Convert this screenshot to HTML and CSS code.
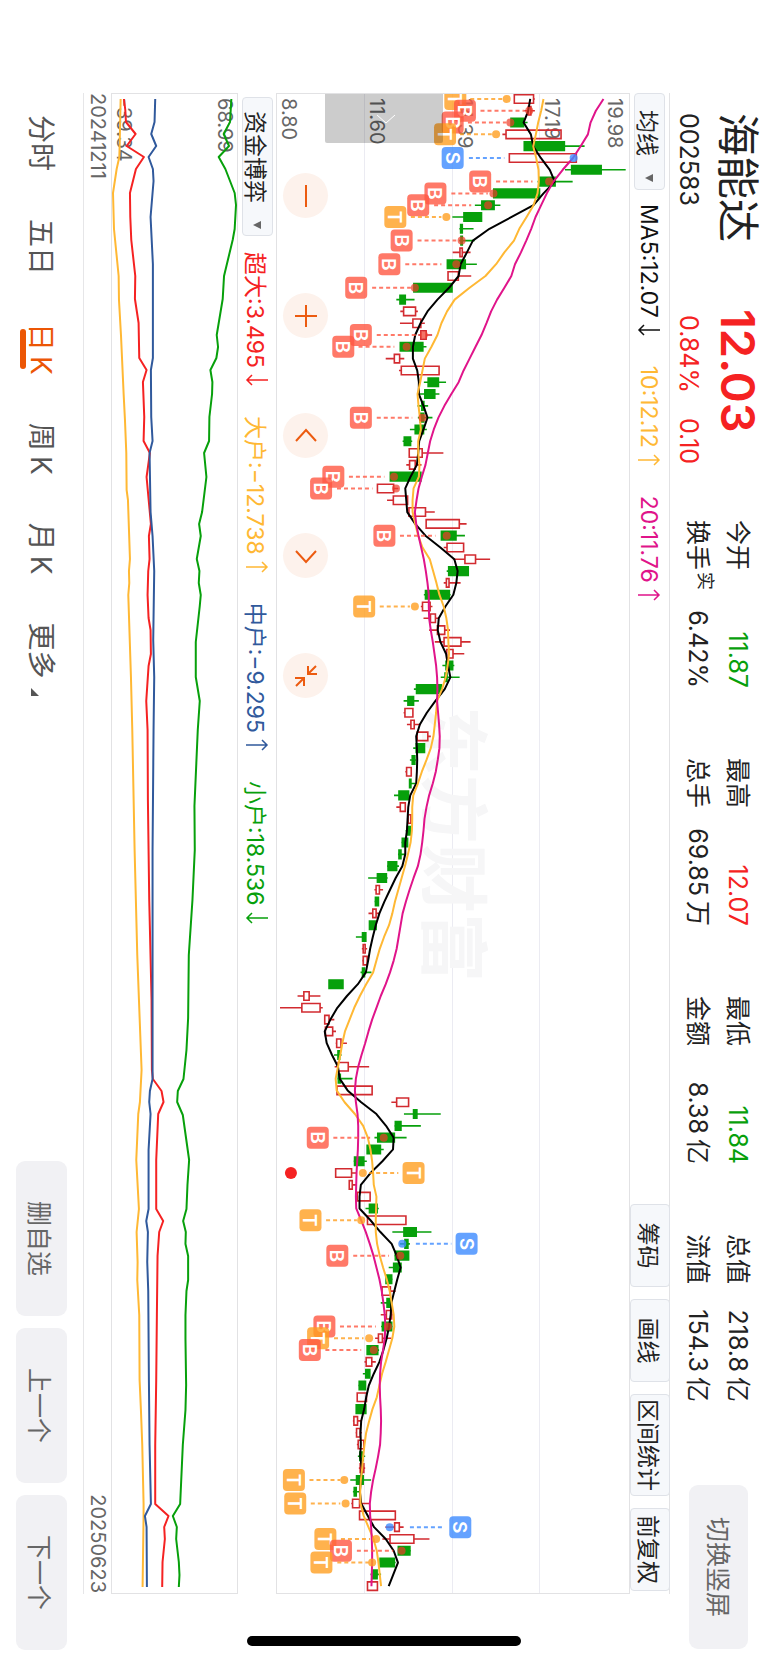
FILE: index.html
```html
<!DOCTYPE html>
<html lang="zh-CN">
<head>
<meta charset="utf-8">
<meta name="viewport" content="width=device-width, initial-scale=1">
<title>海能达 002583</title>
<link rel="stylesheet" href="styles.css">
</head>
<body>
<svg class="symbols">
  <symbol id="arrow-down" viewBox="0 0 12 24"><path d="M6 1V22M1 17L6 22L11 17"/></symbol>
  <symbol id="arrow-up" viewBox="0 0 12 24"><path d="M6 23V2M1 7L6 2L11 7"/></symbol>
</svg>
<div class="viewport">
<main class="screen">
  <header class="quote">
    <div class="identity">
      <h1 class="name">海能达</h1>
      <span class="code">002583</span>
    </div>
    <div class="last">
      <strong class="price">12.03</strong>
      <div class="change"><span>0.84%</span><span>0.10</span></div>
    </div>
    <dl class="stats">
      <div class="stat"><dt>今开</dt><dd class="down">11.87</dd></div>
      <div class="stat"><dt>最高</dt><dd class="up">12.07</dd></div>
      <div class="stat"><dt>最低</dt><dd class="down">11.84</dd></div>
      <div class="stat"><dt>总值</dt><dd>218.8<span class="unit">亿</span></dd></div>
      <div class="stat"><dt>换手<sup>实</sup></dt><dd>6.42%</dd></div>
      <div class="stat"><dt>总手</dt><dd>69.85<span class="unit">万</span></dd></div>
      <div class="stat"><dt>金额</dt><dd>8.38<span class="unit">亿</span></dd></div>
      <div class="stat"><dt>流值</dt><dd>154.3<span class="unit">亿</span></dd></div>
    </dl>
    <button class="soft-button rotate-button" type="button">切换竖屏</button>
  </header>

  <section class="charts">
    <div class="toolbar">
      <button class="picker" type="button">均线<svg class="caret" viewBox="0 0 8 8"><path d="M0 0h8L4 8z"/></svg></button>
      <ul class="legend">
        <li class="ma5">MA5:12.07<svg class="arrow"><use href="#arrow-down"/></svg></li>
        <li class="gold">10:12.12<svg class="arrow"><use href="#arrow-up"/></svg></li>
        <li class="magenta">20:11.76<svg class="arrow"><use href="#arrow-up"/></svg></li>
      </ul>
      <div class="tools">
        <button class="tool" type="button">筹码</button>
        <button class="tool" type="button">画线</button>
        <button class="tool wide" type="button">区间统计</button>
        <button class="tool" type="button">前复权</button>
      </div>
    </div>

    <div class="plot">
      <div class="band"><span>19.98</span><span>17.19</span></div>
      <div class="band"><span>14.39</span></div>
      <div class="band"><span>11.60</span></div>
      <div class="band"><span>8.80</span></div>
      <div class="watermark">东方财富</div>
      <svg class="canvas" id="candles" role="img" aria-label="日K"></svg>
      <button class="handle" type="button" aria-label="展开"><svg viewBox="0 0 10 20"><path d="M1 1l8 9-8 9"/></svg></button>
      <div class="controls">
        <button class="round" type="button" aria-label="缩小"><svg viewBox="-12 -12 24 24"><path d="M-11 0H11"/></svg></button>
        <button class="round" type="button" aria-label="放大"><svg viewBox="-12 -12 24 24"><path d="M-11 0H11M0-11V11"/></svg></button>
        <button class="round" type="button" aria-label="左移"><svg viewBox="-12 -12 24 24"><path d="M5-10L-6 0L5 10"/></svg></button>
        <button class="round" type="button" aria-label="右移"><svg viewBox="-12 -12 24 24"><path d="M-5-10L6 0L-5 10"/></svg></button>
        <button class="round" type="button" aria-label="收起"><svg viewBox="-12 -12 24 24"><path d="M-10-2H-2V-11M-2-2L-10-10M10 2H2V11M2 2L10 10"/></svg></button>
      </div>
    </div>

    <div class="toolbar sub">
      <button class="picker" type="button">资金博弈<svg class="caret" viewBox="0 0 8 8"><path d="M0 0h8L4 8z"/></svg></button>
      <ul class="legend">
        <li class="up">超大:3.495<svg class="arrow"><use href="#arrow-down"/></svg></li>
        <li class="gold">大户:−12.738<svg class="arrow"><use href="#arrow-up"/></svg></li>
        <li class="navy">中户:−9.295<svg class="arrow"><use href="#arrow-up"/></svg></li>
        <li class="down">小户:18.536<svg class="arrow"><use href="#arrow-down"/></svg></li>
      </ul>
    </div>

    <div class="plot flow">
      <span>68.99</span>
      <span>-39.34</span>
      <svg class="canvas" id="funds" role="img" aria-label="资金博弈"></svg>
    </div>
    <div class="dates"><time>20241211</time><time>20250623</time></div>
  </section>

  <footer class="bottom">
    <nav class="tabs">
      <button type="button">分时</button>
      <button type="button">五日</button>
      <button type="button" class="active" aria-current="true">日<span class="k">K</span></button>
      <button type="button">周<span class="k">K</span></button>
      <button type="button">月<span class="k">K</span></button>
      <button type="button">更多<svg class="corner" viewBox="0 0 8 8"><path d="M8 0v8H0z"/></svg></button>
    </nav>
    <div class="actions">
      <button class="soft-button" type="button">删自选</button>
      <button class="soft-button" type="button">上一个</button>
      <button class="soft-button" type="button">下一个</button>
    </div>
  </footer>
  <div class="home-bar"></div>
</main>
</div>
<script src="chart.js"></script>
</body>
</html>
```

FILE: styles.css
```css
* { box-sizing: border-box; }

html, body { margin: 0; height: 100%; background: #fff; }

body {
  font-family: Inter, "Noto Sans CJK SC", sans-serif;
  color: #222;
}

button {
  margin: 0;
  padding: 0;
  border: 0;
  background: none;
  font: inherit;
  color: inherit;
  white-space: nowrap;
}

ul, dl, dd, h1 { margin: 0; padding: 0; list-style: none; }

.symbols { display: none; }

.viewport {
  position: relative;
  width: 100%;
  height: 100%;
  overflow: hidden;
}

/* Landscape screen turned a quarter clockwise to fill a portrait window */
.screen {
  position: relative;
  display: flex;
  flex-direction: column;
  width: 100vh;
  height: 100vw;
  transform-origin: 0 0;
  transform: translateX(100vw) rotate(90deg);
}

.up { color: #f52222; }
.down { color: #07a00b; }
.gold { color: #ffb834; }
.magenta { color: #e0148a; }
.navy { color: #30599c; }
.ma5 { color: #111; }

.quote {
  display: flex;
  align-items: flex-start;
  height: 98px;
  padding: 0 14px 0 113px;
  line-height: 40px;
}

.identity { width: 196px; padding-top: 10px; }
.name { font-size: 43px; font-weight: 400; line-height: 40px; white-space: nowrap; }
.code { display: block; font-size: 25px; line-height: 58px; }

.last { width: 211px; padding-top: 10px; color: #f52222; }
.price { display: block; font-size: 47px; font-weight: 600; line-height: 40px; }
.change { display: flex; gap: 25px; padding-left: 6px; font-size: 25px; line-height: 58px; }

.stats {
  display: grid;
  grid-template-columns: repeat(4, 168px);
  column-gap: 70px;
  padding-top: 10px;
  font-size: 25px;
}
.stat { display: flex; justify-content: space-between; white-space: nowrap; }
.stat dt { display: flex; }
.stat sup { font-size: 18px; line-height: 26px; padding-left: 2px; }
.unit { margin-left: 5px; }

.soft-button {
  border-radius: 9px;
  background: #f1f1f4;
  color: #666;
  font-size: 25px;
}
.rotate-button { width: 164px; height: 59px; margin: 20px 0 0 auto; }

.charts {
  flex: 1;
  display: flex;
  flex-direction: column;
  padding: 0 69px 0 93px;
}

.toolbar {
  display: flex;
  align-items: center;
  height: 40px;
  border-top: 1px solid #e2e2e4;
  font-size: 23px;
}
.toolbar.sub { height: 38px; border: 0; padding-left: 4px; }

.picker {
  display: flex;
  align-items: center;
  height: 31px;
  padding: 0 7px 0 16px;
  border: 1px solid #dfe2e8;
  border-radius: 4px;
  background: #f6f8fb;
}
.caret { width: 8px; height: 8px; margin-left: 18px; fill: #666; }
.sub .picker { padding: 0 6px 0 13px; }

.legend { display: flex; gap: 25px; margin-left: 14px; white-space: nowrap; }
.legend li { display: flex; align-items: center; }
.sub .legend { margin-left: 16px; }
.arrow {
  width: 12px;
  height: 24px;
  margin: 0 5px 0 6px;
  fill: none;
  stroke: currentColor;
  stroke-width: 1.5;
}

.tools { display: flex; gap: 12px; align-self: stretch; margin: -1px 3px 0 auto; }
.tool {
  min-width: 83px;
  border: 1px solid #dfe2e8;
  border-radius: 4px;
  background: #f6f8fb;
}
.tool.wide { min-width: 102px; }

.plot {
  position: relative;
  display: flex;
  flex-direction: column;
  flex: 354 1 0;
  border: 1px solid #e2e2e4;
  font-size: 20px;
  line-height: 24px;
  color: #666;
}
.band {
  flex: 1;
  display: flex;
  flex-direction: column;
  border-bottom: 1px solid #ebebf2;
  padding-left: 4px;
}
.band:nth-child(1) { padding-top: 2px; }
.band:nth-child(4) { border-bottom: 0; }
.band span:last-child { margin-top: auto; }
.canvas { position: absolute; inset: 0; width: 100%; height: 100%; }

.watermark {
  position: absolute;
  left: 612px;
  top: 142px;
  font-size: 69px;
  font-weight: 700;
  line-height: 68px;
  color: #f6f6f7;
}

.handle {
  position: absolute;
  left: 0;
  top: 186px;
  width: 49px;
  height: 118px;
  border-radius: 0 2px 2px 0;
  background: rgba(0, 0, 0, .2);
}
.handle svg { width: 10px; height: 20px; fill: none; stroke: #fff; stroke-width: 1; }

.controls { position: absolute; left: 79px; bottom: 6px; display: flex; gap: 75px; }
.round {
  display: grid;
  place-items: center;
  width: 45px;
  height: 45px;
  border-radius: 50%;
  background: #fdf2ec;
}
.round svg { width: 24px; height: 24px; fill: none; stroke: #ec5b10; stroke-width: 2; }

.flow { flex-grow: 126; justify-content: space-between; padding-left: 4px; }

.dates {
  display: flex;
  justify-content: space-between;
  height: 28px;
  padding: 0 1px 0 0;
  border-bottom: 1px solid #e6e6e8;
  font-size: 20px;
  line-height: 27px;
  color: #666;
}

.bottom {
  display: flex;
  justify-content: space-between;
  height: 83px;
  padding: 16px 13px 16px 115px;
}
.tabs { display: flex; gap: 48px; padding-bottom: 4px; font-size: 28px; color: #555; }
.tabs button { position: relative; }
.k { margin-left: 5px; }
.tabs .active { color: #ec5605; }
.tabs .active::after {
  content: "";
  position: absolute;
  left: 6px;
  right: 6px;
  bottom: 0;
  height: 6px;
  border-radius: 3px;
  background: #ec5605;
}
.corner { width: 8px; height: 8px; margin-left: 9px; fill: #555; }

.actions { display: flex; gap: 12px; }
.actions .soft-button { width: 155px; }

.home-bar {
  position: absolute;
  right: 17px;
  top: 247px;
  bottom: 247px;
  width: 10px;
  border-radius: 5px;
  background: #000;
}

/* Chart marks */
.rise { fill: none; stroke: #d22b30; stroke-width: 1.6; }
.fall { fill: #07a00b; stroke: #07a00b; stroke-width: 1.6; }
.line { fill: none; stroke-width: 2; stroke-linejoin: round; }
.l-black { stroke: #000; }
.l-gold { stroke: #ffb834; }
.l-magenta { stroke: #e0148a; }
.l-red { stroke: #f52222; }
.l-navy { stroke: #30599c; }
.l-green { stroke: #07a00b; }
.lead { fill: none; stroke-width: 2; stroke-dasharray: 4 3; opacity: .8; }
.mark text {
  fill: #fff;
  stroke: none;
  font: 600 19px Inter, sans-serif;
  text-anchor: middle;
}
.mark-B { fill: #ff5742; stroke: #ff5742; }
.mark-T { fill: #ff9f20; stroke: #ff9f20; }
.mark-S { fill: #3d8bff; stroke: #3d8bff; }
.tag { stroke: none; opacity: .8; }
.dot { stroke: none; opacity: .8; }
.mark-B .dot { fill: #ee3c28; opacity: .7; }
.event { fill: #f52222; }
```

FILE: chart.js
```js
// Price levels share one scale: 4 is the bottom axis (8.80), 1066 the top (19.98).
const LOW = 4, HIGH = 1066;

// direction, low, body low, body high, high
const candles = `r 718 720 778 782|r 750 762 770 782|g 708 710 748 760|r 684 695 861 861|g 750 750 871 932|r 705 705 907 907|g 873 893 982 1056|g 790 797 843 896|g 655 658 796 796|g 601 622 659 678
g 533 568 621 623|g 554 558 563 597|g 554 559 563 600|r 534 556 563 588|g 516 518 572 607|r 520 520 551 590|g 415 417 532 532|g 364 375 391 419|r 376 386 422 429|r 375 414 438 450
r 430 438 454 472|g 376 376 444 455|r 332 358 374 388|r 372 379 493 493|g 447 460 491 514|g 434 450 480 494|g 428 441 447 460|g 429 436 447 473|g 405 421 446 456|g 383 388 407 412
r 403 403 442 506|r 394 404 421 440|g 345 346 438 440|r 307 307 356 370|r 336 355 398 398|r 400 402 452 480|r 454 454 554 576|g 498 500 544 571|r 507 517 567 567|r 535 571 603 647
g 516 522 581 581|r 507 515 523 558|g 447 452 524 528|r 438 443 466 473|r 446 467 482 492|r 463 488 510 526|r 480 508 559 588|r 515 516 535 569|g 503 514 534 539|g 498 511 517 555
g 417 425 500 505|g 386 399 416 432|r 386 390 414 414|r 396 408 418 437|r 425 427 459 468|g 415 424 449 449|g 405 412 420 424|r 391 395 409 411|g 402 404 408 422|g 357 372 401 401
r 364 376 391 393|r 396 400 408 409|g 392 397 406 408|g 379 382 398 400|g 369 372 378 392|g 336 339 365 372|g 279 307 334 338|r 298 303 313 324|g 298 301 310 312|r 280 293 303 312
g 281 283 303 304|g 242 262 272 273|r 260 264 270 276|r 261 264 276 281|g 256 262 268 289|g 161 161 203 203|r 66 85 101 135|r 13 79 134 142|r 147 148 161 177|r 148 150 172 182
r 181 184 197 215|g 176 188 193 199|r 178 188 219 282|g 186 189 195 232|r 185 185 291 291|r 349 365 401 401|g 387 416 426 498|g 358 361 378 438|g 298 308 358 395|g 274 276 316 326
g 235 238 266 275|r 181 181 229 245|r 221 222 231 245|r 245 246 285 287|g 271 283 306 311|r 277 277 393 395|g 352 387 424 470|g 375 390 399 405|g 358 361 401 401|g 341 356 378 380
g 331 333 350 353|r 320 321 346 362|g 317 336 346 347|r 317 334 350 353|g 318 322 350 353|r 300 310 322 349|g 274 276 308 312|r 268 273 290 302|g 263 272 284 285|g 249 252 271 273
r 246 246 274 274|g 241 243 272 274|r 233 236 247 258|r 241 244 255 260|r 245 249 266 268|g 248 254 264 270|r 251 255 266 270|g 225 244 264 288|g 233 237 243 252|r 228 232 253 285
r 253 253 361 361|r 331 359 373 386|r 322 345 417 464|g 368 370 405 408|g 314 315 358 362|g 286 290 306 318|r 277 277 307 307`
  .split(/[|\n]/).map(s => s.split(' '));

const averages = {
  black: [768,762,748,770,777,800,827,842,808,778,712,645,595,577,558,552,523,488,458,437,421,414,414,427,432,432,446,458,446,433,430,426,407,391,394,397,421,452,497,539,549,545,536,512,492,489,497,514,520,527,510,482,456,435,424,426,427,426,424,406,400,398,396,391,391,382,362,345,328,313,302,293,285,279,272,248,215,186,165,148,154,170,188,193,217,258,304,333,356,354,322,286,257,253,253,286,316,350,365,377,367,358,349,347,342,335,325,313,296,281,273,267,258,256,257,255,260,257,254,258,277,297,332,356,369,355,341],
  gold: [808,801,792,785,777,786,793,794,790,778,757,735,719,690,665,633,585,540,517,500,488,470,450,443,436,428,431,435,438,430,430,434,432,416,413,413,421,430,443,465,475,485,494,507,515,520,521,523,519,513,502,487,484,480,476,468,455,441,429,415,412,412,411,407,399,390,380,370,360,352,342,327,314,304,294,273,254,237,223,209,201,195,188,181,184,208,239,264,278,286,291,294,296,304,303,302,302,306,314,324,335,344,350,356,358,352,342,332,321,313,305,292,282,273,268,264,261,257,255,256,265,280,295,305,310,314,318],
  magenta: [989,966,950,942,920,897,866,838,818,801,784,771,756,740,722,711,690,668,650,636,621,603,585,567,552,530,509,491,477,466,459,452,441,431,425,420,424,431,439,447,453,458,462,462,463,468,474,479,484,487,488,487,490,493,495,494,489,483,474,463,455,449,446,442,437,429,416,404,393,383,377,371,365,356,345,332,317,304,291,280,270,259,249,242,239,242,247,249,249,248,246,244,243,242,243,258,272,284,295,304,313,320,325,329,331,329,324,318,315,314,315,317,318,317,315,309,302,294,288,284,285,288,290,291,291,290,289]
};

// candle index, letter, tag level, dot level, leader start, leader end
const marks = [
  [0,'T',542,697,587,685],[1,'B',571,765,618,750],[2,'B',534,708,580,696],[3,'T',511,665,556,652],[5,'S',534,899,583,690],
  [7,'B',617,825,665,775],[8,'B',482,657,530,640],[9,'B',430,641,478,590],[10,'T',361,515,408,500],[12,'B',380,561,428,545],
  [14,'B',343,545,391,500],[16,'B',243,420,291,408],[20,'B',257,447,305,430],[21,'B',204,395,250,358],[27,'B',257,443,305,412],
  [32,'B',174,357,221,328],[33,'B',137,363,185,292],[37,'B',328,516,375,482],[43,'T',267,420,314,405],[88,'B',127,326,174,285],
  [91,'T',416,263,282,370],[95,'T',105,258,152,245],[97,'S',576,382,423,530],[98,'B',186,376,234,342],[104,'B',147,339,194,302],
  [105,'T',128,282,176,265],[106,'B',103,296,150,258],[117,'T',55,207,102,195],[119,'T',59,211,106,195],[121,'S',557,344,405,510],
  [122,'T',150,303,197,285],[123,'B',197,380,245,355],[124,'T',138,291,186,280]
];

// position along the axis, level
const funds = {
  gold: '99,362 146,359 157,358 169,350 193,339 229,342 276,356 300,357 335,363 394,371 420,375 453,379 490,380 500,384 559,390 571,387 583,388 595,385 677,393 730,397 850,404 955,412 1070,425 1102,420 1114,415 1160,409 1209,417 1232,410 1262,413 1280,412 1315,418 1380,419 1410,423 1445,427 1504,431 1516,431 1587,428',
  red: '99,372 110,376 122,378 134,407 146,380 157,432 169,408 193,390 217,391 240,394 276,406 299,405 323,416 358,418 370,440 382,429 417,433 441,431 453,450 477,440 524,453 536,447 559,449 571,445 595,443 618,446 630,452 654,453 666,446 701,439 730,443 800,444 900,448 1000,455 1070,456 1079,459 1091,485 1102,491 1114,475 1160,469 1209,469 1221,490 1232,478 1256,473 1315,471 1380,469 1445,466 1504,466 1516,506 1527,493 1539,495 1562,488 1587,487',
  navy: '99,466 122,464 134,454 146,469 157,446 169,459 181,461 217,452 264,459 358,459 370,453 417,454 441,458 453,449 512,452 536,458 571,463 640,460 677,463 730,461 850,458 1000,458 1079,458 1091,450 1102,448 1114,452 1150,446 1209,446 1221,439 1232,444 1262,442 1291,445 1380,447 1445,449 1504,453 1516,435 1527,440 1587,441',
  green: '99,695 122,691 134,672 146,688 157,657 169,677 181,691 193,705 205,709 229,705 240,699 276,673 299,669 335,651 347,655 358,650 370,632 382,638 394,637 417,629 441,628 453,613 477,620 512,607 524,598 536,603 559,591 571,599 583,597 595,603 606,600 642,588 677,588 701,600 730,594 806,584 850,585 900,578 955,567 1018,565 1050,560 1079,551 1091,534 1102,532 1115,549 1160,568 1185,563 1209,560 1221,550 1232,558 1244,557 1256,565 1280,565 1291,560 1315,557 1339,557 1385,559 1410,557 1445,549 1504,541 1516,519 1527,531 1539,529 1562,537 1575,539 1587,537'
};

function drawCandles(svg) {
  const w = svg.clientWidth, h = svg.clientHeight;
  const step = w / 127;
  const x = i => step * (i + 0.42);
  const y = v => (HIGH - v) / (HIGH - LOW) * h;
  const half = step * 0.36;
  let out = '';

  candles.forEach(([dir, lo, b1, b2, hi], i) => {
    const cx = x(i), top = y(b2), bottom = y(b1);
    out += `<path class="${dir === 'r' ? 'rise' : 'fall'}" d="M${cx} ${y(hi)}V${top}M${cx} ${bottom}V${y(lo)}M${cx - half} ${top}h${2 * half}V${bottom}h${-2 * half}z"/>`;
  });

  for (const [name, values] of Object.entries(averages)) {
    out += `<polyline class="line l-${name}" points="${values.map((v, i) => x(i) + ',' + y(v)).join(' ')}"/>`;
  }

  for (const [i, letter, tag, dot, from, to] of marks) {
    const cx = x(i), ty = y(tag);
    out += `<g class="mark mark-${letter}"><path class="lead" d="M${cx} ${y(from)}V${y(to)}"/>` +
      `<circle class="dot" cx="${cx}" cy="${y(dot)}" r="4"/>` +
      `<rect class="tag" x="${cx - 11}" y="${ty - 11}" width="22" height="22" rx="4"/>` +
      `<text x="${cx}" y="${ty + 7}">${letter}</text></g>`;
  }
  out += `<circle class="event" cx="${x(91)}" cy="${y(46)}" r="6"/>`;
  svg.innerHTML = out;
}

function drawFunds(svg) {
  const w = svg.clientWidth, h = svg.clientHeight;
  let out = '';
  for (const [name, points] of Object.entries(funds)) {
    const line = points.split(' ').map(p => {
      const [px, v] = p.split(',').map(Number);
      return (px - 94) / 1499 * w + ',' + (712 - v) / 376 * h;
    }).join(' ');
    out += `<polyline class="line l-${name}" points="${line}"/>`;
  }
  svg.innerHTML = out;
}

drawCandles(document.getElementById('candles'));
drawFunds(document.getElementById('funds'));
```
